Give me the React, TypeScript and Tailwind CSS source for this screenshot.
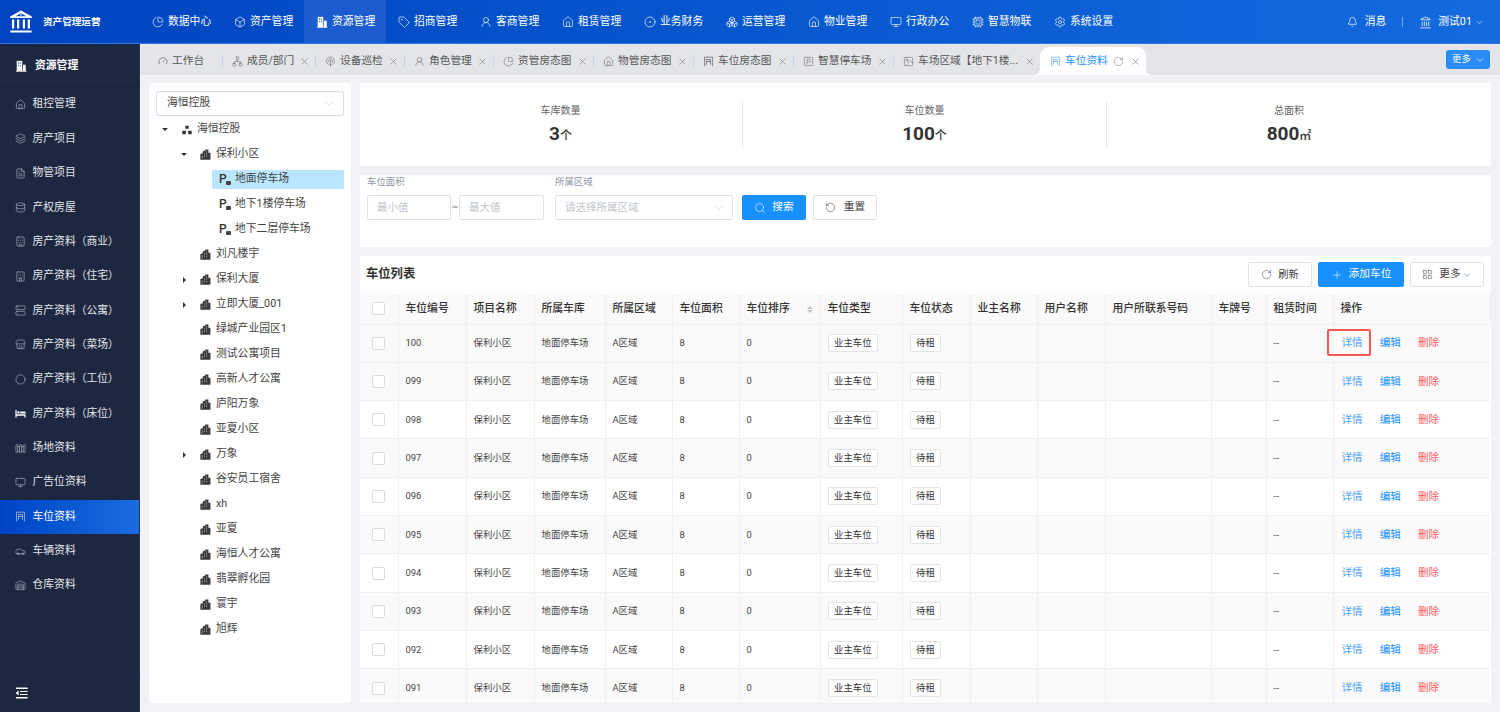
import React from "react";
import {
  PieChart, Box, Tag, UserRound, Home, CircleDot, Boxes, House, Monitor, Cpu, Settings, Bell, ChevronDown, X,
  Gauge, Network, Podcast, RotateCw, SquareParking, Image, Layers, FileText, Database, Store, Car, Warehouse,
  Search, Plus, LayoutGrid, Circle, Building, Hotel, Fence, Landmark, RotateCcw, Server,
} from "lucide-react";

type IC = React.ComponentType<{ className?: string; strokeWidth?: number }>;

const DocBuilding = ({ className = "" }: { className?: string }) => (
  <svg viewBox="0 0 14 14" className={className} fill="currentColor">
    <path d="M2 1h6.5v12H2z" />
    <path d="M9.3 5.5H12.5V13H9.3z" />
    <path d="M1 12.6h12.5v1H1z" />
    <path d="M3.5 3h1.4v1.3H3.5zM6 3h1.2v1.3H6zM3.5 6h1.4v1.3H3.5zM6 6h1.2v1.3H6z" fill="#1657c9" />
  </svg>
);

const ParkingLot = ({ className = "" }: { className?: string }) => (
  <svg viewBox="0 0 14 14" className={className} fill="none" stroke="currentColor" strokeWidth="1">
    <path d="M2 13V1.5h10V13" />
    <path d="M4.5 4.5h5M4.5 7h5M9.5 4.5V11M4.5 4.5V11" />
  </svg>
);

const BedSolid = ({ className = "" }: { className?: string }) => (
  <svg viewBox="0 0 14 14" className={className} fill="white">
    <path d="M.5 2.5h1.6v5.3H13.5V12h-1.6v-2H2.1v2H.5z" />
    <circle cx="4.4" cy="5.6" r="1.5" />
    <path d="M6.6 4.6h5.4c.9 0 1.5.7 1.5 1.6v.8H6.6z" />
  </svg>
);

const CollapseIcon = () => (
  <svg viewBox="0 0 13 12" className="w-[13px] h-[12px]" fill="white">
    <path d="M1 .6h11.6v1.3H1zM5 3.9h7.6v1.2H5zM5 6.9h7.6v1.2H5zM1 10.1h11.6v1.3H1z" />
    <path d="M3.6 3.4v5.2L.6 6z" />
  </svg>
);

const TreeBuilding = () => (
  <svg viewBox="0 0 12 12" className="w-[11px] h-[11px] shrink-0 text-[#3a3a3a]" fill="currentColor">
    <path d="M.4 5.4 3 4.6V2.6L5.8 1.6V.6h3.4v3.4h2.2v7.6H.4z" />
    <path d="M2 7h.9v1.1H2zM2 9h.9v1.1H2zM6.8 2.6h.9v1.1h-.9zM6.8 5h.9v1.1h-.9zM6.8 7.4h.9v1.1h-.9zM4.6 5h.8v1.1h-.8zM4.6 7.4h.8v1.1h-.8z" fill="#cfcfcf" />
  </svg>
);

const ParkIcon = () => (
  <span className="relative w-[12px] h-[13px] shrink-0 text-[12px] leading-[13px] font-medium text-[#333]">
    P
    <span className="absolute right-0 bottom-[1px] w-[5px] h-[4px] rounded-[1px] bg-[#444]" />
  </span>
);

const OrgIcon = () => (
  <svg viewBox="0 0 12 12" className="w-[10px] h-[10px] shrink-0 text-[#333]" fill="currentColor">
    <path d="M4 .8h4v3.8H4zM.4 6.8h4.2v4.4H.4zM7.4 6.8h4.2v4.4H7.4z" />
  </svg>
);

const LogoIcon = () => (
  <svg viewBox="0 0 24 24" className="w-[24px] h-[24px] shrink-0 text-white" fill="currentColor">
    <path d="M12 .6 22.8 6.4V8H1.2V6.4zM12 3.2 6.6 6.2h10.8z" fillRule="evenodd" />
    <circle cx="12" cy="4.9" r="0.8" />
    <path d="M3 9.6h2.2v9H3zM8 9.6h2.2v9H8zM13.8 9.6H16v9h-2.2zM18.8 9.6H21v9h-2.2zM1.4 20.6h21.2v2H1.4z" />
  </svg>
);

const topNav: [IC, string][] = [
  [PieChart, "数据中心"], [Box, "资产管理"], [DocBuilding as IC, "资源管理"], [Tag, "招商管理"], [UserRound, "客商管理"],
  [Home, "租赁管理"], [CircleDot, "业务财务"], [Boxes, "运营管理"], [House, "物业管理"], [Monitor, "行政办公"],
  [Cpu, "智慧物联"], [Settings, "系统设置"],
];

const sideNav: [IC, string][] = [
  [Home, "租控管理"], [Layers, "房产项目"], [FileText, "物管项目"], [Database, "产权房屋"],
  [Building, "房产资料（商业）"], [Hotel, "房产资料（住宅）"], [Server, "房产资料（公寓）"], [Store, "房产资料（菜场）"],
  [Circle, "房产资料（工位）"], [BedSolid as IC, "房产资料（床位）"], [Fence, "场地资料"], [Monitor, "广告位资料"],
  [ParkingLot as IC, "车位资料"], [Car, "车辆资料"], [Warehouse, "仓库资料"],
];

const tabs: [IC, string, string][] = [
  [Network, "成员/部门", "w-[93px]"], [Podcast, "设备巡检", "w-[89px]"], [UserRound, "角色管理", "w-[89px]"],
  [PieChart, "资管房态图", "w-[100px]"], [House, "物管房态图", "w-[100px]"], [ParkingLot as IC, "车位房态图", "w-[100px]"],
  [SquareParking, "智慧停车场", "w-[100px]"], [Image, "车场区域【地下1楼...", "w-[147px]"],
];

const tree: { name: string; level: number; arrow?: "down" | "right"; kind: "org" | "b" | "p"; active?: boolean }[] = [
  { name: "海恒控股", level: 0, arrow: "down", kind: "org" },
  { name: "保利小区", level: 1, arrow: "down", kind: "b" },
  { name: "地面停车场", level: 2, kind: "p", active: true },
  { name: "地下1楼停车场", level: 2, kind: "p" },
  { name: "地下二层停车场", level: 2, kind: "p" },
  { name: "刘凡楼宇", level: 1, kind: "b" },
  { name: "保利大厦", level: 1, arrow: "right", kind: "b" },
  { name: "立即大厦_001", level: 1, arrow: "right", kind: "b" },
  { name: "绿城产业园区1", level: 1, kind: "b" },
  { name: "测试公寓项目", level: 1, kind: "b" },
  { name: "高新人才公寓", level: 1, kind: "b" },
  { name: "庐阳万象", level: 1, kind: "b" },
  { name: "亚夏小区", level: 1, kind: "b" },
  { name: "万象", level: 1, arrow: "right", kind: "b" },
  { name: "谷安员工宿舍", level: 1, kind: "b" },
  { name: "xh", level: 1, kind: "b" },
  { name: "亚夏", level: 1, kind: "b" },
  { name: "海恒人才公寓", level: 1, kind: "b" },
  { name: "翡翠孵化园", level: 1, kind: "b" },
  { name: "寰宇", level: 1, kind: "b" },
  { name: "旭辉", level: 1, kind: "b" },
];

const columns = ["车位编号", "项目名称", "所属车库", "所属区域", "车位面积", "车位排序", "车位类型", "车位状态", "业主名称", "用户名称", "用户所联系号码", "车牌号", "租赁时间", "操作"];
const rows = ["100", "099", "098", "097", "096", "095", "094", "093", "092", "091"];

const Checkbox = () => <span className="block w-[13px] h-[13px] mx-auto rounded-[2px] border border-[#dcdcdc] bg-white" />;
const Pill = ({ children }: { children: React.ReactNode }) => (
  <span className="inline-flex items-center justify-center h-[18px] px-[5.5px] rounded-[2px] border border-[#e4e4e4] bg-white text-[9.4px] text-[#333]">{children}</span>
);

const Cell = ({ children, className = "" }: { children?: React.ReactNode; className?: string }) => (
  <td className={`border-r border-b border-[#f0f0f0] px-[7px] text-[9.4px] text-[#444] whitespace-nowrap ${className}`}>{children}</td>
);

export default function App() {
  return (
    <div className="w-[1500px] h-[712px] overflow-hidden flex flex-col bg-[#f0f2f5] font-['Roboto','Noto_Sans_CJK_SC',sans-serif]">
      <header className="h-[44px] shrink-0 flex items-center text-white bg-gradient-to-r from-[#0044bf] to-[#156ade] border-b border-[#2f7ae0]">
        <div className="w-[140px] shrink-0 flex items-center pl-[9px] pt-[1px] gap-[10px]">
          <LogoIcon />
          <span className="text-[9.6px] font-bold">资产管理运营</span>
        </div>
        <nav className="flex h-full">
          {topNav.map(([I, t], i) => (
            <div key={t} className={`w-[82px] h-full flex items-center pl-[12px] pt-[1px] gap-[4px] ${i === 2 ? "bg-[#1c5cce]" : ""}`}>
              <I className="w-[12px] h-[12px] shrink-0" strokeWidth={1.3} />
              <span className="text-[10.8px] whitespace-nowrap">{t}</span>
            </div>
          ))}
        </nav>
        <div className="ml-auto flex items-center pr-[16px] pt-[1px]">
          <Bell className="w-[11px] h-[12px] mr-[7px]" strokeWidth={1.5} />
          <span className="text-[10.8px]">消息</span>
          <span className="w-px h-[10px] bg-[#6fa3ea] mx-[16px]" />
          <Landmark className="w-[13px] h-[13px] mr-[6px]" strokeWidth={1.4} />
          <span className="text-[10.8px]">测试01</span>
          <ChevronDown className="w-[9px] h-[9px] ml-[3px]" strokeWidth={1.5} />
        </div>
      </header>

      <div className="flex-1 flex min-h-0">
        <aside className="w-[140px] shrink-0 bg-[#1e2740] flex flex-col text-[#e2e5ea] border-r border-[#2a3450]">
          <div className="h-[43.4px] shrink-0 flex items-center pl-[15px] pt-[1px] gap-[8px] border-b border-[#182036]">
            <DocBuilding className="w-[12px] h-[12px] shrink-0 text-white" />
            <span className="text-[10.8px] font-bold text-white">资源管理</span>
          </div>
          <div className="flex-1">
            {sideNav.map(([I, t], i) => (
              <div key={t} className={`h-[34.35px] flex items-center pl-[15px] gap-[7px] ${i === 12 ? "bg-gradient-to-r from-[#0044c4] to-[#1a6ce0] text-white" : ""}`}>
                <I className="w-[11px] h-[11px] shrink-0 text-[#b8bec9] -ml-[0.5px]" strokeWidth={1.3} />
                <span className="text-[10.8px] whitespace-nowrap">{t}</span>
              </div>
            ))}
          </div>
          <div className="h-[39px] shrink-0 flex items-center pl-[15px] border-t border-[#232c46]">
            <CollapseIcon />
          </div>
        </aside>

        <main className="flex-1 min-w-0 flex flex-col">
          <div className="h-[31px] shrink-0 bg-[#e3e5e8] flex items-end pl-[9px] pr-[10px] text-[#555]">
            <div className="h-[28px] w-[73px] pl-[9px] flex items-center gap-[4px]">
              <Gauge className="w-[10px] h-[10px] shrink-0" strokeWidth={1.4} />
              <span className="text-[10.7px] whitespace-nowrap">工作台</span>
            </div>
            {tabs.map(([I, t, w]) => (
              <div key={t} className={`h-[28px] flex items-center ${w}`}>
                <span className="w-px h-[12px] bg-[#c5d6ea] shrink-0" />
                <span className="w-[9px] shrink-0" />
                <I className="w-[11px] h-[11px] shrink-0 text-[#666]" strokeWidth={1.2} />
                <span className="ml-[4px] text-[10.7px] whitespace-nowrap">{t}</span>
                <X className="ml-auto mr-[5px] w-[11px] h-[11px] shrink-0 text-[#777]" strokeWidth={1.3} />
              </div>
            ))}
            <div className="relative h-[28px] w-[106px] bg-white rounded-t-[9px] flex items-center pl-[10px] text-[#1890ff]">
              <span className="absolute -left-[6px] bottom-0 w-[6px] h-[6px] bg-[radial-gradient(circle_at_0_0,transparent_6px,white_6px)]" />
              <span className="absolute -right-[6px] bottom-0 w-[6px] h-[6px] bg-[radial-gradient(circle_at_100%_0,transparent_6px,white_6px)]" />
              <ParkingLot className="w-[11px] h-[11px] shrink-0 text-[#6cb2f5]" />
              <span className="ml-[4px] text-[10.7px] whitespace-nowrap">车位资料</span>
              <RotateCw className="ml-[5px] w-[11px] h-[11px] shrink-0 text-[#777]" strokeWidth={1.2} />
              <X className="ml-[6px] w-[11px] h-[11px] shrink-0 text-[#777]" strokeWidth={1.3} />
            </div>
            <div className="ml-auto mb-[6px] w-[44px] h-[19px] rounded-[3px] bg-[#2a8cf5] text-white flex items-center pl-[6px] gap-[4px]">
              <span className="text-[9.4px]">更多</span>
              <ChevronDown className="w-[10px] h-[10px]" strokeWidth={1.5} />
            </div>
          </div>

          <div className="flex-1 min-h-0 flex gap-[9px] pt-[8px] pl-[9px] pr-[9px] pb-[9px]">
            <section className="w-[202px] shrink-0 bg-white rounded-[4px] pt-[8px] px-[7px]">
              <div className="h-[25px] rounded-[2px] border border-[#dcdfe6] flex items-center justify-between pl-[10px] pr-[8px] text-[10.8px] text-[#444]">
                海恒控股
                <ChevronDown className="w-[12px] h-[12px] text-[#bbb]" strokeWidth={1.2} />
              </div>
              <div className="mt-[1px]">
                {tree.map((n) => (
                  <div key={n.name} className={`h-[25px] flex items-center ${n.level === 0 ? "pl-[6px]" : n.level === 1 ? "pl-[25px]" : "pl-[56px]"}`}>
                    {n.level < 2 && (
                      <span className="w-[6px] h-[6px] shrink-0 flex items-center justify-center">
                        {n.arrow === "down" && <span className="w-0 h-0 border-x-[3px] border-x-transparent border-t-[3px] border-t-[#333]" />}
                        {n.arrow === "right" && <span className="w-0 h-0 border-y-[3px] border-y-transparent border-l-[3px] border-l-[#333]" />}
                      </span>
                    )}
                    <div className={`flex items-center h-[19px] rounded-[1px] ${n.active ? "bg-[#bae7ff] w-[132px] pl-[7px]" : n.level === 2 ? "pl-[7px]" : n.level === 1 ? "pl-[13px]" : "pl-[14px]"} ${n.level === 2 ? "gap-[4px]" : "gap-[5px]"}`}>
                      {n.kind === "org" && <OrgIcon />}
                      {n.kind === "b" && <TreeBuilding />}
                      {n.kind === "p" && <ParkIcon />}
                      <span className="text-[10.8px] text-[#444] whitespace-nowrap">{n.name}</span>
                    </div>
                  </div>
                ))}
              </div>
            </section>

            <div className="flex-1 min-w-0 flex flex-col gap-[9px]">
              <section className="h-[83px] shrink-0 bg-white flex items-center px-[19px] pr-[20px]">
                {[["车库数量", "3", "个"], ["车位数量", "100", "个"], ["总面积", "800", "㎡"]].map(([l, v, u], i) => (
                  <div key={l} className={`w-[364px] h-[46px] pt-[1px] flex flex-col items-center ${i < 2 ? "border-r border-[#e8e8e8]" : ""}`}>
                    <span className="text-[10px] leading-[16px] text-[#666]">{l}</span>
                    <span className="mt-[3px] text-[19px] leading-[24px] font-bold text-[#333]">
                      {v}
                      <span className="text-[12px] font-medium">{u}</span>
                    </span>
                  </div>
                ))}
              </section>

              <section className="h-[72px] shrink-0 bg-white px-[7px] pt-[1px]">
                <div className="flex items-end">
                  <div>
                    <div className="h-[19px] text-[9.4px] leading-[11px] text-[#8c96a8]">车位面积</div>
                    <div className="flex items-center">
                      <div className="w-[84px] h-[25px] rounded-[2px] border border-[#e2e2e2] flex items-center pl-[9px] text-[10.5px] text-[#c0c4cc]">最小值</div>
                      <span className="w-[8px] text-center text-[9.4px] text-[#666]">~</span>
                      <div className="w-[85px] h-[25px] rounded-[2px] border border-[#e2e2e2] flex items-center pl-[9px] text-[10.5px] text-[#c0c4cc]">最大值</div>
                    </div>
                  </div>
                  <div className="ml-[11px]">
                    <div className="h-[19px] text-[9.4px] leading-[11px] text-[#8c96a8]">所属区域</div>
                    <div className="w-[178px] h-[25px] rounded-[2px] border border-[#e2e2e2] flex items-center justify-between pl-[9px] pr-[7px] text-[10.5px] text-[#c0c4cc]">
                      请选择所属区域
                      <ChevronDown className="w-[12px] h-[12px]" strokeWidth={1.2} />
                    </div>
                  </div>
                  <button className="ml-[9px] w-[64px] h-[25px] rounded-[2px] bg-[#1890ff] text-white flex items-center justify-center gap-[6px] text-[10.7px]">
                    <Search className="w-[12px] h-[12px]" strokeWidth={1.2} />
                    搜索
                  </button>
                  <button className="ml-[7px] w-[64px] h-[25px] rounded-[2px] border border-[#e2e2e2] text-[#444] flex items-center justify-center gap-[8px] text-[10.7px]">
                    <RotateCcw className="w-[11px] h-[11px]" strokeWidth={1.2} />
                    重置
                  </button>
                </div>
              </section>

              <section className="flex-1 min-h-0 overflow-hidden bg-white">
                <div className="h-[37px] flex items-center pl-[6px] pr-[7px]">
                  <span className="text-[12.3px] font-bold text-[#333]">车位列表</span>
                  <button className="ml-auto w-[64px] h-[25px] rounded-[2px] border border-[#e2e2e2] text-[#444] flex items-center justify-center gap-[6px] text-[10.2px]">
                    <RotateCw className="w-[11px] h-[11px]" strokeWidth={1.2} />
                    刷新
                  </button>
                  <button className="ml-[6px] w-[86px] h-[25px] rounded-[2px] bg-[#1890ff] text-white flex items-center justify-center gap-[6px] text-[10.7px]">
                    <Plus className="w-[12px] h-[12px]" strokeWidth={1.2} />
                    添加车位
                  </button>
                  <button className="ml-[6px] w-[74px] h-[25px] rounded-[2px] border border-[#e2e2e2] text-[#444] flex items-center justify-center text-[10.7px]">
                    <LayoutGrid className="w-[11px] h-[11px] mr-[6px]" strokeWidth={1.1} />
                    更多
                    <ChevronDown className="w-[10px] h-[10px] ml-[1px]" strokeWidth={1.2} />
                  </button>
                </div>
                <table className="table-fixed w-[1130px] border-collapse">
                  <colgroup>
                    <col className="w-[38px]" /><col className="w-[68px]" /><col className="w-[68px]" /><col className="w-[71px]" /><col className="w-[67px]" /><col className="w-[67px]" /><col className="w-[81px]" /><col className="w-[82px]" /><col className="w-[68px]" /><col className="w-[67px]" /><col className="w-[68px]" /><col className="w-[106px]" /><col className="w-[55px]" /><col className="w-[67px]" /><col className="w-[157px]" />
                  </colgroup>
                  <thead>
                    <tr className="h-[31px] bg-[#fafafa]">
                      <th className="border-r border-b border-[#f0f0f0]"><Checkbox /></th>
                      {columns.map((c) => (
                        <th key={c} className="border-r border-b border-[#f0f0f0] px-[7px] pt-[2px] text-left text-[10.8px] font-medium text-[#333] whitespace-nowrap">
                          <span className="flex items-center justify-between">
                            {c}
                            {c === "车位排序" && (
                              <span className="flex flex-col gap-[1px]">
                                <span className="w-0 h-0 border-x-[3px] border-x-transparent border-b-[3px] border-b-[#bfbfbf]" />
                                <span className="w-0 h-0 border-x-[3px] border-x-transparent border-t-[3px] border-t-[#bfbfbf]" />
                              </span>
                            )}
                          </span>
                        </th>
                      ))}
                    </tr>
                  </thead>
                  <tbody>
                    {rows.map((r, i) => (
                      <tr key={r} className={`h-[38.33px] ${i < 2 || i % 2 === 1 ? "bg-[#fafafa]" : "bg-white"}`}>
                        <td className="border-r border-b border-[#f0f0f0]"><Checkbox /></td>
                        <Cell>{r}</Cell>
                        <Cell>保利小区</Cell>
                        <Cell>地面停车场</Cell>
                        <Cell>A区域</Cell>
                        <Cell>8</Cell>
                        <Cell>0</Cell>
                        <Cell><Pill>业主车位</Pill></Cell>
                        <Cell><Pill>待租</Pill></Cell>
                        <Cell />
                        <Cell />
                        <Cell />
                        <Cell />
                        <Cell className="[font-variant-ligatures:none] tracking-[0.4px] text-[#333]">--</Cell>
                        <td className="relative border-b border-[#f0f0f0] pl-[8px] whitespace-nowrap text-[10.6px]">
                          {i === 0 && <span className="absolute left-[-7px] top-[4px] w-[44px] h-[27px] rounded-[2px] border-2 border-[#f55656]" />}
                          <span className="text-[#4ba2f8]">详情</span>
                          <span className="ml-[17px] text-[#1890ff]">编辑</span>
                          <span className="ml-[17px] text-[#ff5a5f]">删除</span>
                        </td>
                      </tr>
                    ))}
                  </tbody>
                </table>
              </section>
            </div>
          </div>
        </main>
      </div>
    </div>
  );
}
